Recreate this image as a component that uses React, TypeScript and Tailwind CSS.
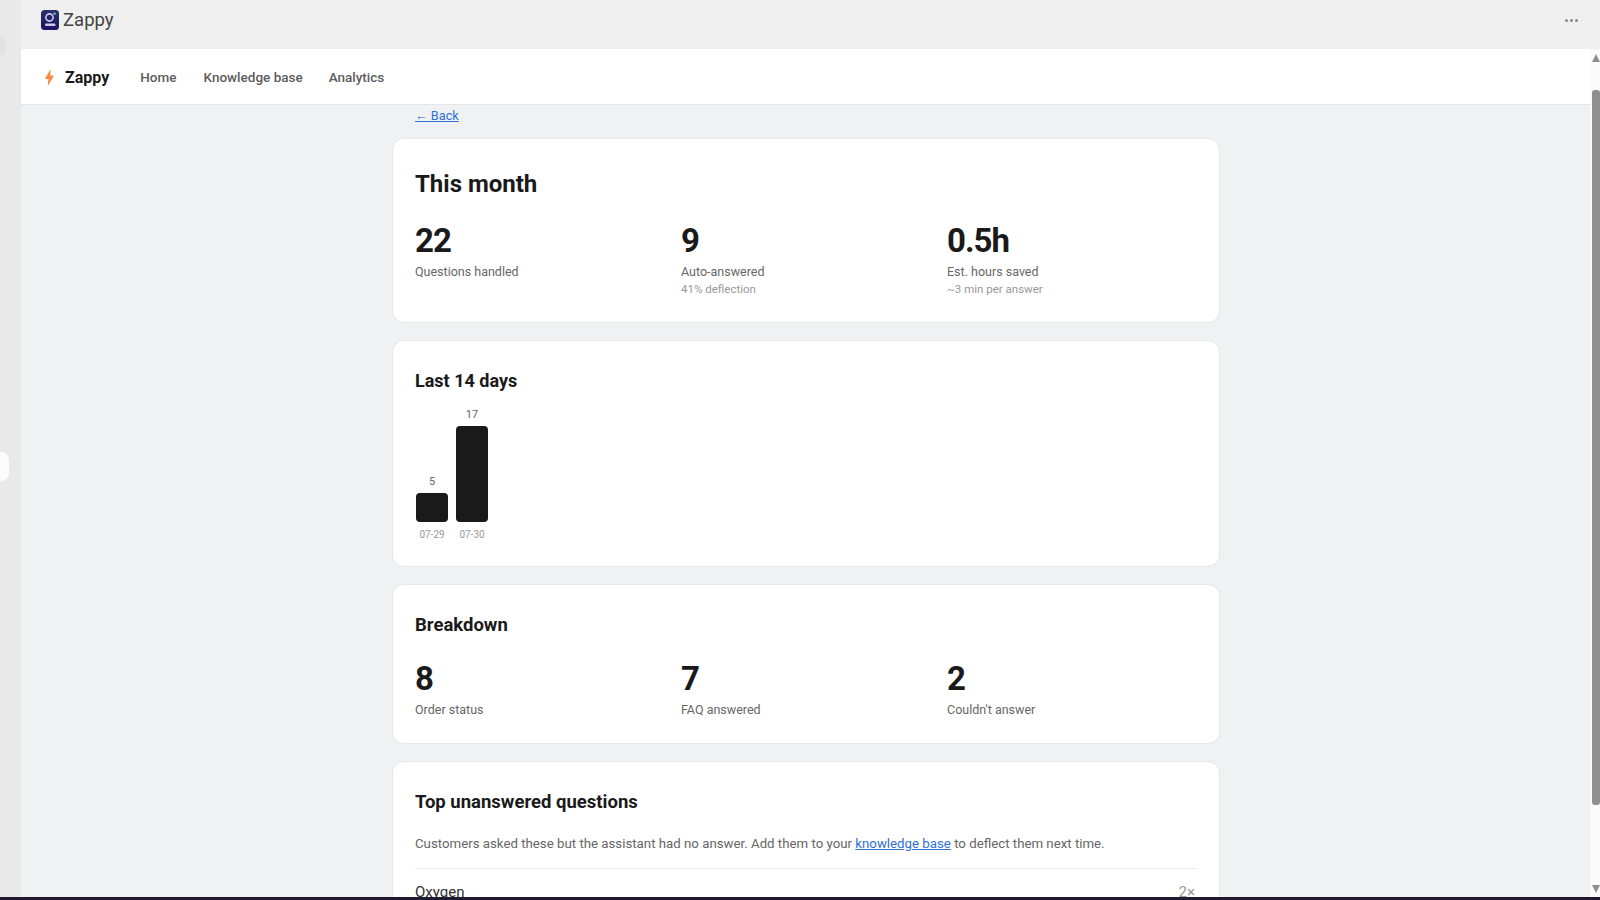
import React from 'react';

interface StatProps {
  value: string;
  label: string;
  sub?: string;
}

const Stat: React.FC<StatProps> = ({ value, label, sub }) => (
  <div>
    <div className="text-[33px] font-bold leading-[38px] tracking-[-1px] text-[#1a1a1a]">{value}</div>
    <div className="mt-[3px] text-[12.5px] leading-[18px] text-[#666666]">{label}</div>
    {sub && <div className="text-[11.5px] leading-[17px] text-[#999999]">{sub}</div>}
  </div>
);

const Bar = ({ value, date, height }: { value: number; date: string; height: string }) => (
  <div className="flex w-[32px] flex-col items-center">
    <div className="mb-[4px] text-[11px] leading-[15px] text-[#666666]">{value}</div>
    <div className={`w-full rounded-[4px] bg-[#1a1a1a] ${height}`} />
    <div className="mt-[6px] text-[10px] leading-[14px] text-[#999999]">{date}</div>
  </div>
);

const AppIcon = () => (
  <svg width="18" height="20" viewBox="0 0 18 20" className="shrink-0">
    <defs>
      <linearGradient id="appicon" x1="0" y1="0" x2="0" y2="1">
        <stop offset="0" stopColor="#2c3268" />
        <stop offset="1" stopColor="#1b1460" />
      </linearGradient>
    </defs>
    <rect width="18" height="20" rx="3.5" fill="url(#appicon)" />
    <circle cx="8.5" cy="7.5" r="3.6" fill="none" stroke="#d5c8f5" strokeWidth="1.6" />
    <circle cx="13.5" cy="3.8" r="1.3" fill="#4fd1a5" />
    <rect x="4" y="13.5" width="10.5" height="2.6" rx="1" fill="#c9c6ea" />
  </svg>
);

const Bolt = () => (
  <svg width="9" height="17" viewBox="0 0 9 17" className="shrink-0">
    <path d="M5.6 0 L0.3 9 Q0 10 1 10 L3.4 10 L2.8 17 L8.7 7.2 Q9 6.6 8 6.6 L5.4 6.6 Z" fill="#f68b45" />
  </svg>
);

const Card = ({ className, children }: { className: string; children: React.ReactNode }) => (
  <section className={`rounded-[12px] border border-[#e6e7ea] bg-white px-[22px] ${className}`}>{children}</section>
);

export default function App() {
  return (
    <div className="flex h-[900px] w-[1600px] flex-col overflow-hidden bg-[#efefef] font-['Roboto',sans-serif]">
      <div className="flex min-h-0 flex-1">
        <aside className="flex w-[21px] shrink-0 flex-col bg-[#e9e9e9]">
          <div className="mt-[36px] h-[20px] w-[6px] rounded-r-[6px] bg-[#e2e2e2]" />
          <div className="mt-[396px] h-[29px] w-[9px] rounded-r-[8px] bg-[#fbfcfc]" />
        </aside>
        <div className="flex min-w-0 flex-1 flex-col">
          <header className="flex h-[49px] shrink-0 items-start justify-between pl-[20px] pr-[22px] pt-[10px]">
            <div className="flex items-center gap-[4px]">
              <AppIcon />
              <span className="text-[18.5px] leading-[20px] text-[#444444]">Zappy</span>
            </div>
            <div className="mt-[9px] flex gap-[2px]">
              <span className="h-[3px] w-[3px] rounded-full bg-[#8a8a8a]" />
              <span className="h-[3px] w-[3px] rounded-full bg-[#8a8a8a]" />
              <span className="h-[3px] w-[3px] rounded-full bg-[#8a8a8a]" />
            </div>
          </header>
          <div className="flex min-h-0 flex-1">
            <div className="flex min-w-0 flex-1 flex-col bg-[#f0f1f3]">
              <nav className="flex h-[56px] shrink-0 items-center border-b border-[#e5e5e5] bg-white pl-[24px] pt-[2px]">
                <Bolt />
                <span className="ml-[11px] text-[16px] font-bold text-[#1a1a1a]">Zappy</span>
                <span className="ml-[31px] text-[13.5px] font-medium text-[#5c5c5c]">Home</span>
                <span className="ml-[27px] text-[13.5px] font-medium text-[#5c5c5c]">Knowledge base</span>
                <span className="ml-[26px] text-[13.5px] font-medium text-[#5c5c5c]">Analytics</span>
              </nav>
              <main className="min-h-0 flex-1 overflow-hidden pl-[1px]">
                <div className="mx-auto flex w-[828px] flex-col">
                  <a className="ml-[23px] mt-[1px] text-[12.7px] leading-[20px] text-[#2f6fd6] underline">← Back</a>
                  <Card className="mt-[12px] h-[185px] pt-[28px]">
                    <h1 className="text-[24px] font-bold leading-[34px] text-[#1a1a1a]">This month</h1>
                    <div className="mt-[21px] grid grid-cols-3 gap-4">
                      <Stat value="22" label="Questions handled" />
                      <Stat value="9" label="Auto-answered" sub="41% deflection" />
                      <Stat value="0.5h" label="Est. hours saved" sub="~3 min per answer" />
                    </div>
                  </Card>
                  <Card className="mt-[17px] h-[227px] pt-[27px]">
                    <h2 className="text-[18px] font-bold leading-[26px] text-[#1a1a1a]">Last 14 days</h2>
                    <div className="ml-[1px] mt-[13px] flex items-end gap-[8px]">
                      <Bar value={5} date="07-29" height="h-[29px]" />
                      <Bar value={17} date="07-30" height="h-[96px]" />
                    </div>
                  </Card>
                  <Card className="mt-[17px] h-[160px] pt-[27px]">
                    <h2 className="text-[18.5px] font-bold leading-[26px] text-[#1a1a1a]">Breakdown</h2>
                    <div className="mt-[22px] grid grid-cols-3 gap-4">
                      <Stat value="8" label="Order status" />
                      <Stat value="7" label="FAQ answered" />
                      <Stat value="2" label="Couldn't answer" />
                    </div>
                  </Card>
                  <Card className="mt-[17px] h-[300px] pt-[27px]">
                    <h2 className="text-[18.5px] font-bold leading-[26px] text-[#1a1a1a]">Top unanswered questions</h2>
                    <p className="mt-[19px] text-[13.25px] leading-[20px] text-[#666666]">
                      Customers asked these but the assistant had no answer. Add them to your{' '}
                      <a className="text-[#2f6fd6] underline">knowledge base</a> to deflect them next time.
                    </p>
                    <div className="mt-[14px] flex justify-between border-t border-[#eeeeee] pr-[2px] pt-[13px] text-[15px] leading-[20px]">
                      <span className="text-[#333333]">Oxygen</span>
                      <span className="text-[#999999]">2×</span>
                    </div>
                  </Card>
                </div>
              </main>
            </div>
            <div className="flex w-[10px] shrink-0 flex-col items-end bg-[#fafafa]">
              <svg width="8" height="8" viewBox="0 0 8 8" className="mt-[5px]"><path d="M4 0 L8 8 L0 8 Z" fill="#8f8f8f" /></svg>
              <div className="mt-[28px] h-[715px] w-[8px] rounded-[3px] bg-[#8f8f8f]" />
              <svg width="8" height="8" viewBox="0 0 8 8" className="mt-[80px]"><path d="M0 0 L8 0 L4 8 Z" fill="#8f8f8f" /></svg>
            </div>
          </div>
        </div>
      </div>
      <div className="h-[3px] shrink-0 bg-[#1f1a2e]" />
    </div>
  );
}
